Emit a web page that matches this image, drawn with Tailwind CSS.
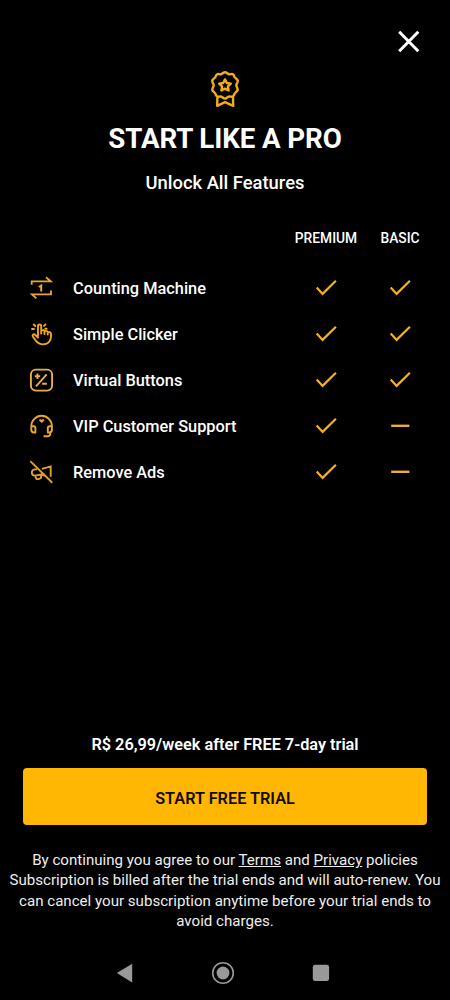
<!DOCTYPE html>
<html lang="en">
<head>
<meta charset="utf-8">
<title>Start like a pro</title>
<script src="https://cdn.jsdelivr.net/npm/@tailwindcss/browser@4"></script>
</head>
<body class="bg-black">
<svg class="hidden">
  <symbol id="check" viewBox="0 0 24 24"><path d="M2.7 11.5 8.6 17.9 21.9 4.7" fill="none" stroke="#f6b026" stroke-width="2.2"/></symbol>
  <symbol id="dash" viewBox="0 0 24 24"><path d="M3.2 11.8H21.4" fill="none" stroke="#e9ad3a" stroke-width="2.4"/></symbol>
</svg>
<main class="flex h-[1000px] w-[450px] flex-col overflow-hidden bg-black font-['Roboto',sans-serif] text-white">
  <header class="flex h-[66px] shrink-0 justify-end pt-[26px] pr-[26px]">
    <svg class="size-[30px]" viewBox="0 0 30 30" fill="none" stroke="#fff" stroke-width="3"><path d="M5.2 5.7 24.3 25.2M24.3 5.7 5.2 25.2"/></svg>
  </header>
  <section class="flex shrink-0 flex-col items-center">
    <svg class="h-[44px] w-[40px]" viewBox="0 0 40 44" fill="none" stroke="#f6ac18" stroke-width="2.4" stroke-linejoin="round" stroke-linecap="round">
      <path d="M20 6.2C22 6.2 22.6 8.4 24.6 8.3 26.8 7.6 28.5 7.8 29.2 10 29.3 12 31.9 12.5 32.7 14.5 33.2 16.8 31.3 17.5 31.3 19.3 31.3 21 33.2 22.2 32.6 24.3 31.8 26.2 29.4 26.5 29.2 28.8 28.5 31 26.6 30.9 24.7 30.4 22.6 30.3 22 32.6 20 32.6 18 32.6 17.4 30.3 15.3 30.4 13.4 30.9 11.5 31 10.8 28.8 10.6 26.5 8.2 26.2 7.4 24.3 6.8 22.2 8.7 21 8.7 19.3 8.7 17.5 6.8 16.8 7.3 14.5 8.1 12.5 10.7 12 10.8 10 11.5 7.8 13.2 7.6 15.4 8.3 17.4 8.4 18 6.2 20 6.2Z"/>
      <path d="M20 13.4 21.8 17 25.8 17.6 22.9 20.4 23.6 24.5 20 22.6 16.4 24.5 17.1 20.4 14.2 17.6 18.2 17Z"/>
      <path d="M12.4 31.5 12.2 39.8 20 36.2 28.2 39.8 28 31.5"/>
    </svg>
    <h1 class="mt-[9px] text-[27.7px] leading-[40px] font-bold tracking-[-0.1px] whitespace-nowrap">START LIKE A PRO</h1>
    <p class="mt-[9px] text-[18.4px] leading-[30px] font-medium">Unlock All Features</p>
  </section>
  <section class="mt-[28px] shrink-0 pr-[13px] pl-[26px]">
    <div class="grid h-[27px] grid-cols-[263px_74px_74px] items-center pb-[2px] text-center text-[13.8px] font-medium">
      <span></span><span>PREMIUM</span><span>BASIC</span>
    </div>
    <div class="mt-[12.5px] grid auto-rows-[45.8px] grid-cols-[47px_216px_74px_74px] items-center text-[16.35px] font-medium">
      <svg class="size-[30px]" viewBox="0 0 30 30" fill="none" stroke="#eaa632" stroke-width="1.8"><path d="M5.7 11.8V8.4H24.8L20 4.2M25 17.6V21.3H5.9L10.4 25.3"/><path stroke-width="2" d="M12.8 14 15.2 12.6V18.4"/></svg>
      <span class="pt-[2.5px]">Counting Machine</span>
      <svg class="size-[24px] justify-self-center"><use href="#check"/></svg>
      <svg class="size-[24px] justify-self-center"><use href="#check"/></svg>

      <svg class="size-[30px]" viewBox="0 0 30 30" fill="none" stroke="#f0a82a" stroke-width="1.9" stroke-linecap="round" stroke-linejoin="round"><path d="M12 17V7.2Q12 5.4 13.6 5.4T15.2 7.2V14.5M15.2 11.7Q18.4 10.1 18.5 12.8V15M18.5 12.2Q21.7 11 21.8 13.8V15.6M21.8 13.3Q25 12.6 25 15.2V17.5C25 22.5 21.5 25.4 17.2 25.4 12.5 25.4 10.5 23 6.8 17.5 6 15.8 7.8 14.6 9.1 15.8L12 18.5"/><path d="M7.8 5.5 9.3 7M6 10H8M18 6.9 19.4 5.5M19.3 9.8H20.6"/></svg>
      <span class="pt-[2.5px]">Simple Clicker</span>
      <svg class="size-[24px] justify-self-center"><use href="#check"/></svg>
      <svg class="size-[24px] justify-self-center"><use href="#check"/></svg>

      <svg class="size-[30px]" viewBox="0 0 30 30" fill="none" stroke="#eaae48" stroke-width="1.9"><rect x="4.9" y="4.6" width="21.2" height="21" rx="5"/><path d="M11.5 8.6V14M8.8 11.3H14.2M20.7 9.4 10 21.4M16.1 18.8H20.9"/></svg>
      <span class="pt-[2.5px]">Virtual Buttons</span>
      <svg class="size-[24px] justify-self-center"><use href="#check"/></svg>
      <svg class="size-[24px] justify-self-center"><use href="#check"/></svg>

      <svg class="size-[30px]" viewBox="0 0 30 30" fill="none" stroke="#eaa632" stroke-width="1.9" stroke-linejoin="round"><path d="M5.3 20V15.3A10.3 10.5 0 0 1 25.9 15.3V20M5.3 15.2H7.3Q9.4 15.2 9.4 17V21.5H8Q5.3 21.5 5.3 18.5M25.9 15.2H23.9Q21.8 15.2 21.8 17V21.5H23.2Q25.9 21.5 25.9 18.5M24.4 21.5Q24.4 25.3 21.5 25.3H17.6"/><path fill="#eaa632" stroke="none" d="M15.7 12 13.2 9.7C12.7 8.4 14.6 7.6 15.7 8.8 16.8 7.6 18.7 8.4 18.2 9.7Z"/></svg>
      <span class="pt-[2px]">VIP Customer Support</span>
      <svg class="size-[24px] justify-self-center"><use href="#check"/></svg>
      <svg class="size-[24px] justify-self-center"><use href="#dash"/></svg>

      <svg class="size-[30px]" viewBox="0 0 30 30" fill="none" stroke="#dda030" stroke-width="1.9"><path d="M4.3 4.1 26.3 25.7M15.8 11.8 24.7 9.4V19.8M11 12.4H8.5Q5.8 13 5.8 15.6 5.8 18.5 9 18.6L15.3 17.6 20 19.2M9 18.6 10.2 21.5Q11.2 22.6 13 21.8L15 20.8V17.8"/></svg>
      <span class="pt-[3px]">Remove Ads</span>
      <svg class="size-[24px] justify-self-center"><use href="#check"/></svg>
      <svg class="size-[24px] justify-self-center"><use href="#dash"/></svg>
    </div>
  </section>
  <section class="mt-auto shrink-0 text-center">
    <p class="text-[16.3px] leading-[24px] font-semibold">R$ 26,99/week after FREE 7-day trial</p>
    <button class="mx-auto mt-[11px] block h-[57px] w-[404px] rounded-[4px] bg-[#ffb703] pt-[5px] text-[16.3px] font-semibold text-[#120c00]">START FREE TRIAL</button>
    <p class="mt-[25px] text-[15.1px] leading-[20.2px] whitespace-nowrap text-[#eeeeee]">By continuing you agree to our <u>Terms</u> and <u>Privacy</u> policies<br>Subscription is billed after the trial ends and will auto-renew. You<br>can cancel your subscription anytime before your trial ends to<br>avoid charges.</p>
  </section>
  <nav class="mt-[28px] mb-[13px] flex h-[28px] shrink-0 items-center justify-center gap-[70px] pr-[4px]">
    <svg class="size-[28px]" viewBox="0 0 28 28"><path fill="#999" d="M5.8 14 21.2 4.8V23.5Z"/></svg>
    <svg class="size-[28px]" viewBox="0 0 28 28"><circle cx="14" cy="14" r="10.3" fill="none" stroke="#999" stroke-width="1.6"/><circle cx="14" cy="14" r="6.4" fill="#999"/></svg>
    <svg class="size-[28px]" viewBox="0 0 28 28"><rect x="5.8" y="5.8" width="16.3" height="16.3" rx="2.4" fill="#999"/></svg>
  </nav>
</main>
</body>
</html>
